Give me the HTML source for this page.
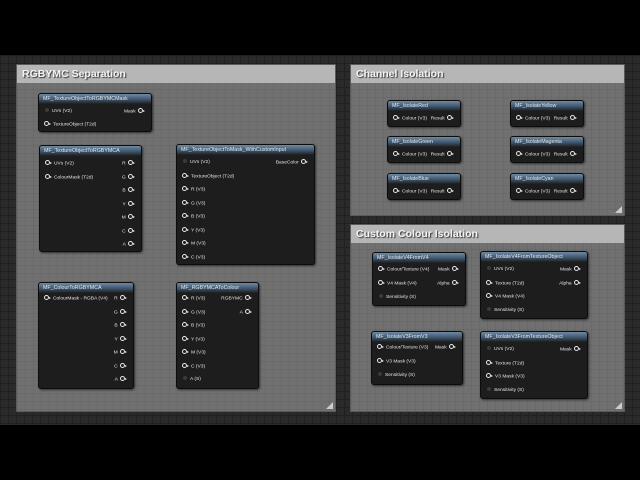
<!DOCTYPE html>
<html><head><meta charset="utf-8"><style>
*{margin:0;padding:0;box-sizing:border-box}
body{width:640px;height:480px;background:#000;position:relative;overflow:hidden;font-family:"Liberation Sans",sans-serif}
.graph{position:absolute;left:0;top:55px;width:640px;height:370px;background-color:#2a2a2a;
background-image:linear-gradient(#202020 1px,transparent 1px),linear-gradient(90deg,#202020 1px,transparent 1px);background-size:8px 8px}
.panel{position:absolute;background-color:#707070;
background-image:linear-gradient(rgba(0,0,0,.05) 1px,transparent 1px),linear-gradient(90deg,rgba(0,0,0,.05) 1px,transparent 1px);background-size:8px 8px;border:1px solid #5a5a5a}
.panel .t{height:18px;background:#b6b6b6;color:#f4f4f4;font-weight:bold;font-size:10.5px;line-height:18px;padding-left:5px;text-shadow:1px 1px 1px #333}
.grip{position:absolute;right:2px;bottom:2px;width:0;height:0;border-left:7px solid transparent;border-bottom:7px solid #ccc}
.node{position:absolute;background:#1d1d1d;border:1px solid #0c0c0c;border-radius:3px;box-shadow:1px 1px 2px rgba(0,0,0,.6);color:#e4e4e4;font-size:4.9px}
.node .h{height:10px;background:linear-gradient(#6f8aa3,#3a5066 60%,#1d1d1d);border-radius:2px 2px 0 0;color:#dfe8f0;font-size:5.3px;line-height:10px;padding-left:4px;white-space:nowrap;overflow:hidden}
.r{position:absolute;left:0;right:0;height:8px;line-height:8px;white-space:nowrap}
.l{position:absolute;left:4px}
.rt{position:absolute;right:4px}
.p{display:inline-block;width:5px;height:5px;border:1px solid #e8e8e8;border-radius:50%;vertical-align:-0.5px;margin:0 0 0 1px}
.d{display:inline-block;width:4px;height:4px;background:#3a3a3a;border-radius:50%;vertical-align:0;margin:0 3px 0 2px}
.a{display:inline-block;width:0;height:0;border-left:2px solid #e8e8e8;border-top:1.5px solid transparent;border-bottom:1.5px solid transparent;vertical-align:0.5px;margin-right:2px}
</style></head><body>
<div class="graph"></div>

<div class="panel" style="left:16px;top:64px;width:320px;height:348px"><div class="t">RGBYMC Separation</div><div class="grip"></div></div>
<div class="panel" style="left:350px;top:64px;width:275px;height:152px"><div class="t">Channel Isolation</div><div class="grip"></div></div>
<div class="panel" style="left:350px;top:224px;width:275px;height:188px"><div class="t">Custom Colour Isolation</div><div class="grip"></div></div>

<div class="node" style="left:38px;top:93px;width:114px;height:39px"><div class="h">MF_TextureObjectToRGBYMCMask</div>
<div class="r" style="top:14px"><span class="l"><span class="d"></span>UVs (V2)</span><span class="rt">Mask <span class="p"></span><span class="a"></span></span></div>
<div class="r" style="top:27px"><span class="l"><span class="p"></span><span class="a"></span>TextureObject (T2d)</span></div></div>

<div class="node" style="left:39px;top:145px;width:103px;height:107px"><div class="h">MF_TextureObjectToRGBYMCA</div>
<div class="r" style="top:14px"><span class="l"><span class="p"></span><span class="a"></span>UVs (V2)</span><span class="rt">R <span class="p"></span><span class="a"></span></span></div>
<div class="r" style="top:27.5px"><span class="l"><span class="p"></span><span class="a"></span>ColourMask (T2d)</span><span class="rt">G <span class="p"></span><span class="a"></span></span></div>
<div class="r" style="top:41px"><span class="rt">B <span class="p"></span><span class="a"></span></span></div>
<div class="r" style="top:54.5px"><span class="rt">Y <span class="p"></span><span class="a"></span></span></div>
<div class="r" style="top:68px"><span class="rt">M <span class="p"></span><span class="a"></span></span></div>
<div class="r" style="top:81.5px"><span class="rt">C <span class="p"></span><span class="a"></span></span></div>
<div class="r" style="top:95px"><span class="rt">A <span class="p"></span><span class="a"></span></span></div></div>

<div class="node" style="left:176px;top:144px;width:139px;height:121px"><div class="h">MF_TextureObjectToMask_WithCustomInput</div>
<div class="r" style="top:14px"><span class="l"><span class="d"></span>UVs (V2)</span><span class="rt">BaseColor <span class="p"></span><span class="a"></span></span></div>
<div class="r" style="top:27.5px"><span class="l"><span class="p"></span><span class="a"></span>TextureObject (T2d)</span></div>
<div class="r" style="top:41px"><span class="l"><span class="p"></span><span class="a"></span>R (V3)</span></div>
<div class="r" style="top:54.5px"><span class="l"><span class="p"></span><span class="a"></span>G (V3)</span></div>
<div class="r" style="top:68px"><span class="l"><span class="p"></span><span class="a"></span>B (V3)</span></div>
<div class="r" style="top:81.5px"><span class="l"><span class="p"></span><span class="a"></span>Y (V3)</span></div>
<div class="r" style="top:95px"><span class="l"><span class="p"></span><span class="a"></span>M (V3)</span></div>
<div class="r" style="top:108.5px"><span class="l"><span class="p"></span><span class="a"></span>C (V3)</span></div></div>

<div class="node" style="left:38px;top:282px;width:96px;height:107px"><div class="h">MF_ColourToRGBYMCA</div>
<div class="r" style="top:12px"><span class="l"><span class="p"></span><span class="a"></span>ColourMask - RGBA (V4)</span><span class="rt">R <span class="p"></span><span class="a"></span></span></div>
<div class="r" style="top:25.5px"><span class="rt">G <span class="p"></span><span class="a"></span></span></div>
<div class="r" style="top:39px"><span class="rt">B <span class="p"></span><span class="a"></span></span></div>
<div class="r" style="top:52.5px"><span class="rt">Y <span class="p"></span><span class="a"></span></span></div>
<div class="r" style="top:66px"><span class="rt">M <span class="p"></span><span class="a"></span></span></div>
<div class="r" style="top:79.5px"><span class="rt">C <span class="p"></span><span class="a"></span></span></div>
<div class="r" style="top:93px"><span class="rt">A <span class="p"></span><span class="a"></span></span></div></div>

<div class="node" style="left:176px;top:282px;width:83px;height:107px"><div class="h">MF_RGBYMCAToColour</div>
<div class="r" style="top:12px"><span class="l"><span class="p"></span><span class="a"></span>R (V3)</span><span class="rt">RGBYMC <span class="p"></span><span class="a"></span></span></div>
<div class="r" style="top:25.5px"><span class="l"><span class="p"></span><span class="a"></span>G (V3)</span><span class="rt">A <span class="p"></span><span class="a"></span></span></div>
<div class="r" style="top:39px"><span class="l"><span class="p"></span><span class="a"></span>B (V3)</span></div>
<div class="r" style="top:52.5px"><span class="l"><span class="p"></span><span class="a"></span>Y (V3)</span></div>
<div class="r" style="top:66px"><span class="l"><span class="p"></span><span class="a"></span>M (V3)</span></div>
<div class="r" style="top:79.5px"><span class="l"><span class="p"></span><span class="a"></span>C (V3)</span></div>
<div class="r" style="top:93px"><span class="l"><span class="d"></span>A (S)</span></div></div>

<div class="node" style="left:387px;top:100px;width:74px;height:27px"><div class="h">MF_IsolateRed</div><div class="r" style="top:14px"><span class="l"><span class="p"></span><span class="a"></span>Colour (V3)</span><span class="rt">Result <span class="p"></span><span class="a"></span></span></div></div>
<div class="node" style="left:387px;top:136px;width:74px;height:27px"><div class="h">MF_IsolateGreen</div><div class="r" style="top:14px"><span class="l"><span class="p"></span><span class="a"></span>Colour (V3)</span><span class="rt">Result <span class="p"></span><span class="a"></span></span></div></div>
<div class="node" style="left:387px;top:173px;width:74px;height:27px"><div class="h">MF_IsolateBlue</div><div class="r" style="top:14px"><span class="l"><span class="p"></span><span class="a"></span>Colour (V3)</span><span class="rt">Result <span class="p"></span><span class="a"></span></span></div></div>
<div class="node" style="left:510px;top:100px;width:74px;height:27px"><div class="h">MF_IsolateYellow</div><div class="r" style="top:14px"><span class="l"><span class="p"></span><span class="a"></span>Colour (V3)</span><span class="rt">Result <span class="p"></span><span class="a"></span></span></div></div>
<div class="node" style="left:510px;top:136px;width:74px;height:27px"><div class="h">MF_IsolateMagenta</div><div class="r" style="top:14px"><span class="l"><span class="p"></span><span class="a"></span>Colour (V3)</span><span class="rt">Result <span class="p"></span><span class="a"></span></span></div></div>
<div class="node" style="left:510px;top:173px;width:74px;height:27px"><div class="h">MF_IsolateCyan</div><div class="r" style="top:14px"><span class="l"><span class="p"></span><span class="a"></span>Colour (V3)</span><span class="rt">Result <span class="p"></span><span class="a"></span></span></div></div>

<div class="node" style="left:372px;top:252px;width:94px;height:54px"><div class="h">MF_IsolateV4FromV4</div>
<div class="r" style="top:13px"><span class="l"><span class="p"></span><span class="a"></span>Colour/Texture (V4)</span><span class="rt">Mask <span class="p"></span><span class="a"></span></span></div>
<div class="r" style="top:27px"><span class="l"><span class="p"></span><span class="a"></span>V4 Mask (V4)</span><span class="rt">Alpha <span class="p"></span><span class="a"></span></span></div>
<div class="r" style="top:40.5px"><span class="l"><span class="d"></span>Sensitivity (S)</span></div></div>

<div class="node" style="left:480px;top:251px;width:108px;height:68px"><div class="h">MF_IsolateV4FromTextureObject</div>
<div class="r" style="top:14px"><span class="l"><span class="d"></span>UVs (V2)</span><span class="rt">Mask <span class="p"></span><span class="a"></span></span></div>
<div class="r" style="top:27.5px"><span class="l"><span class="p"></span><span class="a"></span>Texture (T2d)</span><span class="rt">Alpha <span class="p"></span><span class="a"></span></span></div>
<div class="r" style="top:41px"><span class="l"><span class="p"></span><span class="a"></span>V4 Mask (V4)</span></div>
<div class="r" style="top:54.5px"><span class="l"><span class="d"></span>Sensitivity (S)</span></div></div>

<div class="node" style="left:371px;top:331px;width:92px;height:54px"><div class="h">MF_IsolateV3FromV3</div>
<div class="r" style="top:12px"><span class="l"><span class="p"></span><span class="a"></span>Colour/Texture (V3)</span><span class="rt">Mask <span class="p"></span><span class="a"></span></span></div>
<div class="r" style="top:26px"><span class="l"><span class="p"></span><span class="a"></span>V3 Mask (V3)</span></div>
<div class="r" style="top:39.5px"><span class="l"><span class="d"></span>Sensitivity (S)</span></div></div>

<div class="node" style="left:480px;top:331px;width:108px;height:68px"><div class="h">MF_IsolateV3FromTextureObject</div>
<div class="r" style="top:14px"><span class="l"><span class="d"></span>UVs (V2)</span><span class="rt">Mask <span class="p"></span><span class="a"></span></span></div>
<div class="r" style="top:27.5px"><span class="l"><span class="p"></span><span class="a"></span>Texture (T2d)</span></div>
<div class="r" style="top:41px"><span class="l"><span class="p"></span><span class="a"></span>V3 Mask (V3)</span></div>
<div class="r" style="top:54.5px"><span class="l"><span class="d"></span>Sensitivity (S)</span></div></div>
</body></html>
